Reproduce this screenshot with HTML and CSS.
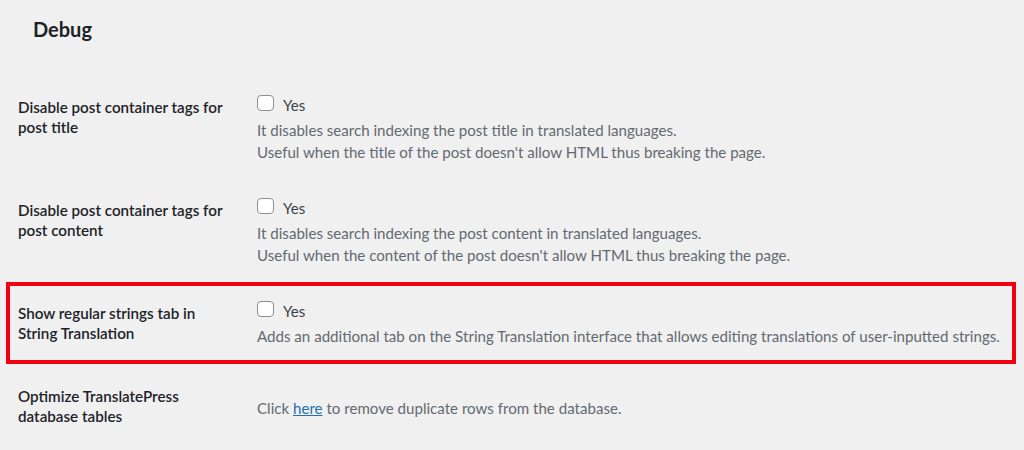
FILE: index.html
```html
<!DOCTYPE html>
<html lang="en">
<head>
<meta charset="utf-8">
<title>Debug settings</title>
<link rel="stylesheet" href="styles.css">
</head>
<body>
<h2 class="section-title">Debug</h2>
<div class="settings">
  <div class="row">
    <div class="label">Disable post container tags for post title</div>
    <div class="field">
      <label class="check-line"><input type="checkbox" class="check"><span class="check-text">Yes</span></label>
      <p class="desc">It disables search indexing the post title in translated languages.<br>Useful when the title of the post doesn't allow HTML thus breaking the page.</p>
    </div>
  </div>
  <div class="row">
    <div class="label">Disable post container tags for post content</div>
    <div class="field">
      <label class="check-line"><input type="checkbox" class="check"><span class="check-text">Yes</span></label>
      <p class="desc">It disables search indexing the post content in translated languages.<br>Useful when the content of the post doesn't allow HTML thus breaking the page.</p>
    </div>
  </div>
  <div class="row row-highlight">
    <div class="label">Show regular strings tab in String Translation</div>
    <div class="field">
      <label class="check-line"><input type="checkbox" class="check"><span class="check-text">Yes</span></label>
      <p class="desc">Adds an additional tab on the String Translation interface that allows editing translations of user-inputted strings.</p>
    </div>
  </div>
  <div class="row row-last">
    <div class="label">Optimize TranslatePress database tables</div>
    <div class="field field-offset">
      <p class="desc">Click <a href="#" class="link">here</a> to remove duplicate rows from the database.</p>
    </div>
  </div>
</div>
</body>
</html>
```
FILE: styles.css
```css
html, body {
  margin: 0;
  padding: 0;
  background: #f0f0f1;
}
body {
  font-family: Lato, "Open Sans", "Liberation Sans", sans-serif;
  color: #1d2327;
}
.section-title {
  margin: 15px 0 33px 33px;
  font-size: 20px;
  line-height: 28px;
  font-weight: 700;
  color: #1d2327;
}
.settings {
  display: flex;
  flex-direction: column;
  margin: 0 8px 0 6px;
}
.row {
  display: grid;
  grid-template-columns: 239px 1fr;
  border: 4px solid transparent;
  padding: 15px 8px 12px 8px;
}
.row-highlight {
  border-color: #f00010;
}
.row-last {
  padding-top: 17px;
}
.label {
  font-size: 15.2px;
  line-height: 20px;
  font-weight: 600;
  width: 215px;
  margin-top: 1.5px;
  color: #1d2327;
}
.field {
  display: flex;
  flex-direction: column;
}
.field-offset {
  padding-top: 13px;
}
.check-line {
  display: flex;
  align-items: flex-start;
  gap: 9px;
  height: 20px;
}
.check {
  appearance: none;
  -webkit-appearance: none;
  width: 17px;
  height: 16px;
  margin: 0;
  border: 1px solid #8c8f94;
  border-radius: 4px;
  background: #fff;
  box-sizing: border-box;
}
.check-text {
  font-size: 15.1px;
  line-height: 20px;
  color: #3c434a;
}
.desc {
  margin: 5px 0 0;
  font-size: 15.1px;
  line-height: 21.5px;
  color: #646970;
}
.field-offset .desc {
  margin-top: 0;
}
.link {
  color: #2271b1;
  text-decoration: underline;
}
```
